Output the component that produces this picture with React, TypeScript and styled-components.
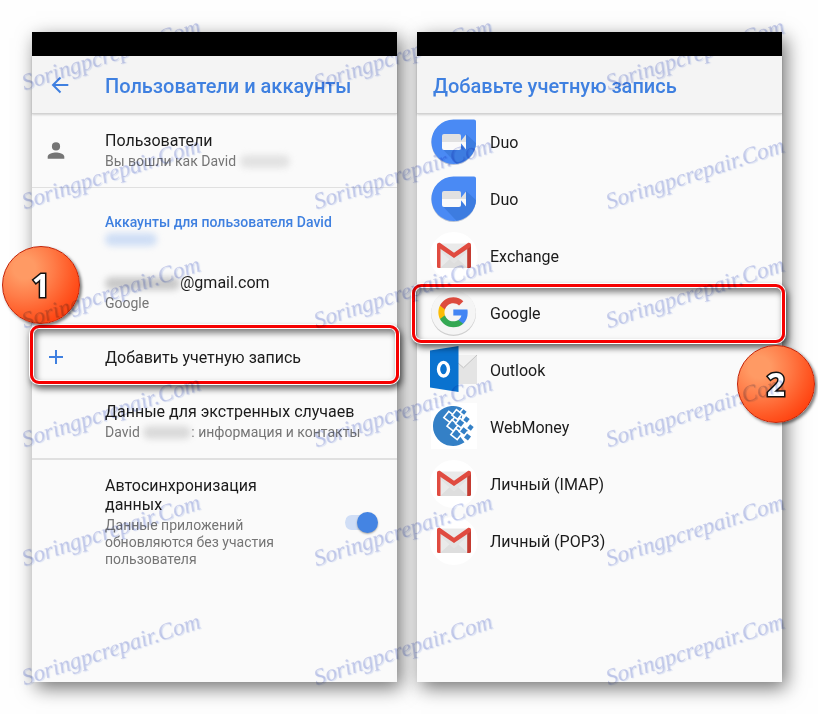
import React, { useState } from "react";
import styled, { createGlobalStyle } from "styled-components";

const GlobalStyle = createGlobalStyle`
  *, *::before, *::after { box-sizing: border-box; }
  body {
    margin: 0;
    background: #fefefe;
    font-family: Roboto, "Noto Sans", sans-serif;
    color: #1b1b1b;
  }
  h1, h2, p, ul { margin: 0; padding: 0; }
  ul { list-style: none; }
`;

const accent = "#3f80e0";

const Page = styled.main`
  position: relative;
  display: grid;
  grid-template-columns: 1fr 1fr;
  gap: 20px;
  min-height: 100vh;
  padding: 32px 36px 32px 32px;
  overflow: hidden;
`;

const Screen = styled.section`
  display: flex;
  flex-direction: column;
  min-width: 0;
  background: #fafafa;
  box-shadow: 4px 6px 18px rgba(0, 0, 0, 0.55);
`;

const StatusBar = styled.div`
  height: 24px;
  background: #000;
`;

const Header = styled.header`
  display: flex;
  align-items: center;
  height: 58px;
  padding: 2px 16px 0;
  background: #f4f4f4;
  border-bottom: 1px solid #d2d2d2;
  box-shadow: 0 1px 2px rgba(0, 0, 0, 0.16);
`;

const Heading = styled.h1`
  font-size: 20px;
  line-height: 24px;
  font-weight: 500;
  color: ${accent};
  white-space: nowrap;
`;

const BackButton = styled.button`
  display: flex;
  width: 57px;
  padding: 0 0 2px;
  border: 0;
  background: none;
  color: ${accent};
  cursor: pointer;
`;

const Item = styled.li<{ $line?: number }>`
  position: relative;
  border-bottom: ${(p) => p.$line ?? 0}px solid #e0e0e0;
`;

const SettingButton = styled.button<{ $tall?: boolean }>`
  display: flex;
  align-items: center;
  width: 100%;
  min-height: ${(p) => (p.$tall ? 73 : 56)}px;
  padding: 0 16px 0 0;
  border: 0;
  background: none;
  font: inherit;
  color: inherit;
  text-align: left;
  cursor: pointer;
`;

const IconSlot = styled.span`
  display: flex;
  flex: none;
  justify-content: center;
  width: 48px;
  margin-right: 25px;
  color: #757575;
`;

const Texts = styled.span`
  display: flex;
  flex: 1;
  flex-direction: column;
  gap: 3px;
  min-width: 0;
`;

const Title = styled.span`
  font-size: 16px;
  line-height: 19px;
`;

const Summary = styled.span`
  font-size: 14px;
  line-height: 17px;
  color: #757575;
`;

const SectionTitle = styled.h2`
  padding: 26px 16px 8px 73px;
  font-size: 14px;
  line-height: 17px;
  font-weight: 500;
  color: ${accent};
`;

const Hidden = styled.span<{ $width: number; $color: string; $block?: boolean }>`
  display: ${(p) => (p.$block ? "block" : "inline-block")};
  width: ${(p) => p.$width}px;
  height: 13px;
  margin: ${(p) => (p.$block ? "2px 0" : "0")};
  border-radius: 7px;
  background: ${(p) => p.$color};
  vertical-align: -2px;
  filter: blur(3px);
`;

const SyncRow = styled.label`
  display: flex;
  align-items: center;
  gap: 45px;
  padding: 16px 19px 17px 73px;
  cursor: pointer;
`;

const Switch = styled.input`
  display: flex;
  align-items: center;
  justify-content: flex-end;
  flex: none;
  width: 33px;
  height: 21px;
  margin: 0;
  appearance: none;
  cursor: pointer;
  border-radius: 11px;
  background:
    radial-gradient(circle at 7px 50%, #d0def6 7px, transparent 8px),
    linear-gradient(#d0def6, #d0def6) 7px center / 18px 15px no-repeat;

  &::before {
    content: "";
    width: 21px;
    height: 21px;
    border-radius: 50%;
    background: #4484e3;
    box-shadow: 0 1px 2px rgba(0, 0, 0, 0.35);
  }
  &:not(:checked) { justify-content: flex-start; }
`;

const AccountButton = styled.button`
  display: flex;
  align-items: center;
  gap: 12px;
  width: 100%;
  height: 57px;
  padding: 0 16px 1px 13px;
  border: 0;
  background: none;
  font: inherit;
  font-size: 16px;
  line-height: 19px;
  color: inherit;
  text-align: left;
  cursor: pointer;
`;

const Ring = styled.span<{ $inset: string }>`
  position: absolute;
  z-index: 1;
  inset: ${(p) => p.$inset};
  border: 3px solid #f60000;
  border-radius: 9px;
  box-shadow:
    0 0 0 1px #fff,
    2px 4px 6px 1px rgba(0, 0, 0, 0.6),
    inset 0 0 0 1px #fff,
    inset 2px 4px 6px 1px rgba(0, 0, 0, 0.5);
  pointer-events: none;
`;

const Callout = styled.span<{ $side: "left" | "right" }>`
  position: absolute;
  z-index: 2;
  top: ${(p) => (p.$side === "left" ? -10 : 60)}px;
  ${(p) => (p.$side === "left" ? "left: -30px" : "right: -33px")};
  display: flex;
  align-items: center;
  justify-content: center;
  width: 78px;
  height: 78px;
  border: 1px solid #c32408;
  border-radius: 50%;
  background: radial-gradient(circle at 28% 28%, #ff9a64 0 14%, #ff7c48 38%, #ff5a26 62%, #ff3c0a 84%, #f23404 100%);
  box-shadow: 2px 2px 3px rgba(0, 0, 0, 0.5);
  font: 700 32px/36px "Open Sans", sans-serif;
  color: #fff;
  -webkit-text-stroke: 3px #111;
  paint-order: stroke fill;
  pointer-events: none;
`;

const Watermarks = styled.div`
  position: absolute;
  z-index: 3;
  inset: 0;
  display: grid;
  grid-template-columns: repeat(3, 292px);
  grid-template-rows: 95px;
  grid-auto-rows: 119px;
  align-items: end;
  padding-left: 26px;
  overflow: hidden;
  mix-blend-mode: multiply;
  pointer-events: none;
`;

const Mark = styled.span`
  justify-self: start;
  font: italic 400 23px/24px "Liberation Serif", serif;
  color: rgba(160, 170, 225, 0.5);
  text-shadow: 1px 1px 1px rgba(140, 165, 230, 0.3);
  transform: rotate(-18deg);
  transform-origin: left bottom;
`;

const BackIcon = () => (
  <svg width="24" height="24" viewBox="0 0 24 24" fill="none" stroke="currentColor" strokeWidth="2">
    <path d="M20.3 12H5.5M12.5 4.5 5 12l7.5 7.5" />
  </svg>
);

const PersonIcon = () => (
  <svg width="24" height="24" viewBox="0 0 24 24" fill="currentColor">
    <path d="M12 11.500a4.100 4.100 0 1 0 0-8.200 4.100 4.100 0 0 0 0 8.200zM12 13.500c-2.800 0-8.300 1.400-8.300 4.100v2.100h16.600v-2.100C20.300 14.900 14.800 13.500 12 13.500z" />
  </svg>
);

const PlusIcon = () => (
  <svg width="24" height="24" viewBox="0 0 24 24" fill="none" stroke={accent} strokeWidth="2">
    <path d="M12 5v14M5 12h14" />
  </svg>
);

const DuoIcon = () => (
  <svg width="48" height="48" viewBox="0 0 48 48">
    <path d="M23.500 2.500H44a2 2 0 0 1 2 2v20a22.300 22.300 0 1 1-22.500-22z" fill="#b9c3d4" />
    <path d="M23.500 1.500H44a2 2 0 0 1 2 2v20a22.300 22.300 0 1 1-22.500-22z" fill="#4a8af4" />
    <path d="M13 31.500 26.500 45.700A22.300 22.300 0 0 0 46 25L36 16 30 31.500z" fill="#3d7ce0" />
    <path d="M14 16h15a2 2 0 0 1 2 2v6H12v-6a2 2 0 0 1 2-2zM36 16.500V24h-6z" fill="#e1e1e1" />
    <path d="M12 24h19v6a2 2 0 0 1-2 2H14a2 2 0 0 1-2-2zM30 24h6v7.500z" fill="#fafafa" />
  </svg>
);

const GmailIcon = () => (
  <svg width="48" height="48" viewBox="0 0 48 48">
    <circle cx="23.700" cy="24" r="24" fill="#fff" />
    <path d="M10 11.500h28V36H10z" fill="#eaeaea" />
    <path d="M10 36 23.800 23.500 38 36z" fill="#dedede" />
    <path d="M10 16v3l14 12.500L38 19v-3L24 26z" fill="#e3e3e3" />
    <path d="M7 12.500 10.500 15v21H8.500A1.500 1.500 0 0 1 7 34.500z" fill="#e04b40" />
    <path d="M41 12.500 37.200 15v21h2.300a1.500 1.500 0 0 0 1.500-1.500z" fill="#c43b31" />
    <path d="M7 13c0-2.200 2-2.800 3.500-1.800L24 20.800l13.500-9.600c1.500-1 3.500-.4 3.500 1.800 0 .900-.4 1.700-1 2.200L24 26 8 15.200c-.6-.5-1-1.300-1-2.200z" fill="#e04b40" />
  </svg>
);

const GoogleIcon = () => (
  <svg width="48" height="48" viewBox="0 0 48 48">
    <circle cx="23.500" cy="24.500" r="22.500" fill="#cfcfcf" />
    <circle cx="23.500" cy="23.500" r="22.300" fill="#f5f5f5" />
    <g transform="translate(7 7) scale(1.360)">
      <path fill="#4285f4" d="M22.560 12.250c0-.780-.070-1.530-.200-2.250H12v4.260h5.920c-.260 1.370-1.040 2.530-2.210 3.310v2.770h3.570c2.080-1.920 3.280-4.740 3.280-8.090z" />
      <path fill="#34a853" d="M12 23c2.970 0 5.460-.980 7.280-2.660l-3.570-2.770c-.980.660-2.230 1.060-3.710 1.060-2.860 0-5.290-1.930-6.160-4.530H2.180v2.840C3.990 20.530 7.700 23 12 23z" />
      <path fill="#fbbc05" d="M5.840 14.090c-.220-.660-.350-1.360-.350-2.090s.130-1.430.350-2.090V7.070H2.180C1.430 8.550 1 10.220 1 12s.430 3.450 1.180 4.930l3.660-2.840z" />
      <path fill="#dd4b3e" d="M12 5.380c1.620 0 3.060.560 4.210 1.640l3.150-3.150C17.450 2.090 14.970 1 12 1 7.700 1 3.990 3.470 2.180 7.070l3.660 2.840c.870-2.600 3.300-4.530 6.160-4.530z" />
    </g>
  </svg>
);

const OutlookIcon = () => (
  <svg width="48" height="48" viewBox="0 0 48 48">
    <path d="M28 9h19v29H28z" fill="#dcdcdc" />
    <path d="M28 14v24h19V9L33 22z" fill="#e4e4e4" />
    <path d="M28 9h19L33.500 21.800 28 17z" fill="#f0f0f0" />
    <path d="m28 17 5.500 4.800L47 9" fill="none" stroke="#c4c4c4" />
    <path d="M0 4.500 28.500 0v46L0 41.500z" fill="#0a72cf" />
    <ellipse cx="13.500" cy="23.200" rx="5" ry="6.800" fill="none" stroke="#fff" strokeWidth="3.400" />
  </svg>
);

const tiles: [number, number, number][] = [
  [19.500, 14, 6.500], [22.700, 22.500, 6.500], [26.500, 31, 6.500],
  [27, 11.500, 5.500], [30.500, 20, 5.500], [34, 28, 5.500],
  [33.800, 9, 4], [36.500, 16.500, 4.500], [40.500, 24.500, 4.500], [37.500, 34, 5],
];

const WebMoneyIcon = () => (
  <svg width="48" height="48" viewBox="0 0 48 48">
    <path d="M1 0h46v46H1z" fill="#fff" />
    <path d="M35 7A20 20 0 1 0 34.500 39.300L29 32 39 22z" fill="#3480c6" />
    <path d="M33 5 46 16v18L38 38l-8-6z" fill="#fff" />
    {tiles.map(([x, y, s]) => (
      <rect
        key={`${x}-${y}`}
        x={x - s / 2}
        y={y - s / 2}
        width={s}
        height={s}
        fill="#3480c6"
        stroke="#fff"
        strokeWidth="3.200"
        paintOrder="stroke"
        transform={`rotate(38 ${x} ${y})`}
      />
    ))}
  </svg>
);

const accounts: { name: string; Icon: () => React.JSX.Element; active?: boolean }[] = [
  { name: "Duo", Icon: DuoIcon },
  { name: "Duo", Icon: DuoIcon },
  { name: "Exchange", Icon: GmailIcon },
  { name: "Google", Icon: GoogleIcon, active: true },
  { name: "Outlook", Icon: OutlookIcon },
  { name: "WebMoney", Icon: WebMoneyIcon },
  { name: "Личный (IMAP)", Icon: GmailIcon },
  { name: "Личный (POP3)", Icon: GmailIcon },
];

export default function App() {
  const [sync, setSync] = useState(true);

  return (
    <>
      <GlobalStyle />
      <Page>
        <Screen>
          <StatusBar />
          <Header>
            <BackButton aria-label="Назад"><BackIcon /></BackButton>
            <Heading>Пользователи и аккаунты</Heading>
          </Header>
          <ul>
            <Item $line={1}>
              <SettingButton $tall>
                <IconSlot><PersonIcon /></IconSlot>
                <Texts>
                  <Title>Пользователи</Title>
                  <Summary>Вы вошли как David <Hidden $width={50} $color="#e2e2e2" /></Summary>
                </Texts>
              </SettingButton>
            </Item>
          </ul>
          <SectionTitle>
            Аккаунты для пользователя David
            <Hidden $width={52} $color="#cfdef5" $block />
          </SectionTitle>
          <ul>
            <Item>
              <SettingButton $tall>
                <IconSlot><GoogleIcon /></IconSlot>
                <Texts>
                  <Title><Hidden $width={75} $color="#c9c9c9" />@gmail.com</Title>
                  <Summary>Google</Summary>
                </Texts>
              </SettingButton>
              <Callout $side="left">1</Callout>
            </Item>
            <Item>
              <SettingButton>
                <IconSlot><PlusIcon /></IconSlot>
                <Title>Добавить учетную запись</Title>
              </SettingButton>
              <Ring $inset="-4px -2px 1px" />
            </Item>
            <Item $line={2}>
              <SettingButton $tall>
                <IconSlot />
                <Texts>
                  <Title>Данные для экстренных случаев</Title>
                  <Summary>David <Hidden $width={48} $color="#dadada" />: информация и контакты</Summary>
                </Texts>
              </SettingButton>
            </Item>
            <Item>
              <SyncRow>
                <Texts>
                  <Title>Автосинхронизация данных</Title>
                  <Summary>Данные приложений обновляются без участия пользователя</Summary>
                </Texts>
                <Switch type="checkbox" role="switch" checked={sync} onChange={(e) => setSync(e.target.checked)} />
              </SyncRow>
            </Item>
          </ul>
        </Screen>

        <Screen>
          <StatusBar />
          <Header>
            <Heading>Добавьте учетную запись</Heading>
          </Header>
          <ul>
            {accounts.map(({ name, Icon, active }, i) => (
              <Item key={i}>
                <AccountButton>
                  <Icon />
                  {name}
                </AccountButton>
                {active && <Ring $inset="-1px -3px -1px -5px" />}
                {active && <Callout $side="right">2</Callout>}
              </Item>
            ))}
          </ul>
        </Screen>

        <Watermarks aria-hidden="true">
          {Array.from({ length: 18 }, (_, i) => (
            <Mark key={i}>Soringpcrepair.Com</Mark>
          ))}
        </Watermarks>
      </Page>
    </>
  );
}
